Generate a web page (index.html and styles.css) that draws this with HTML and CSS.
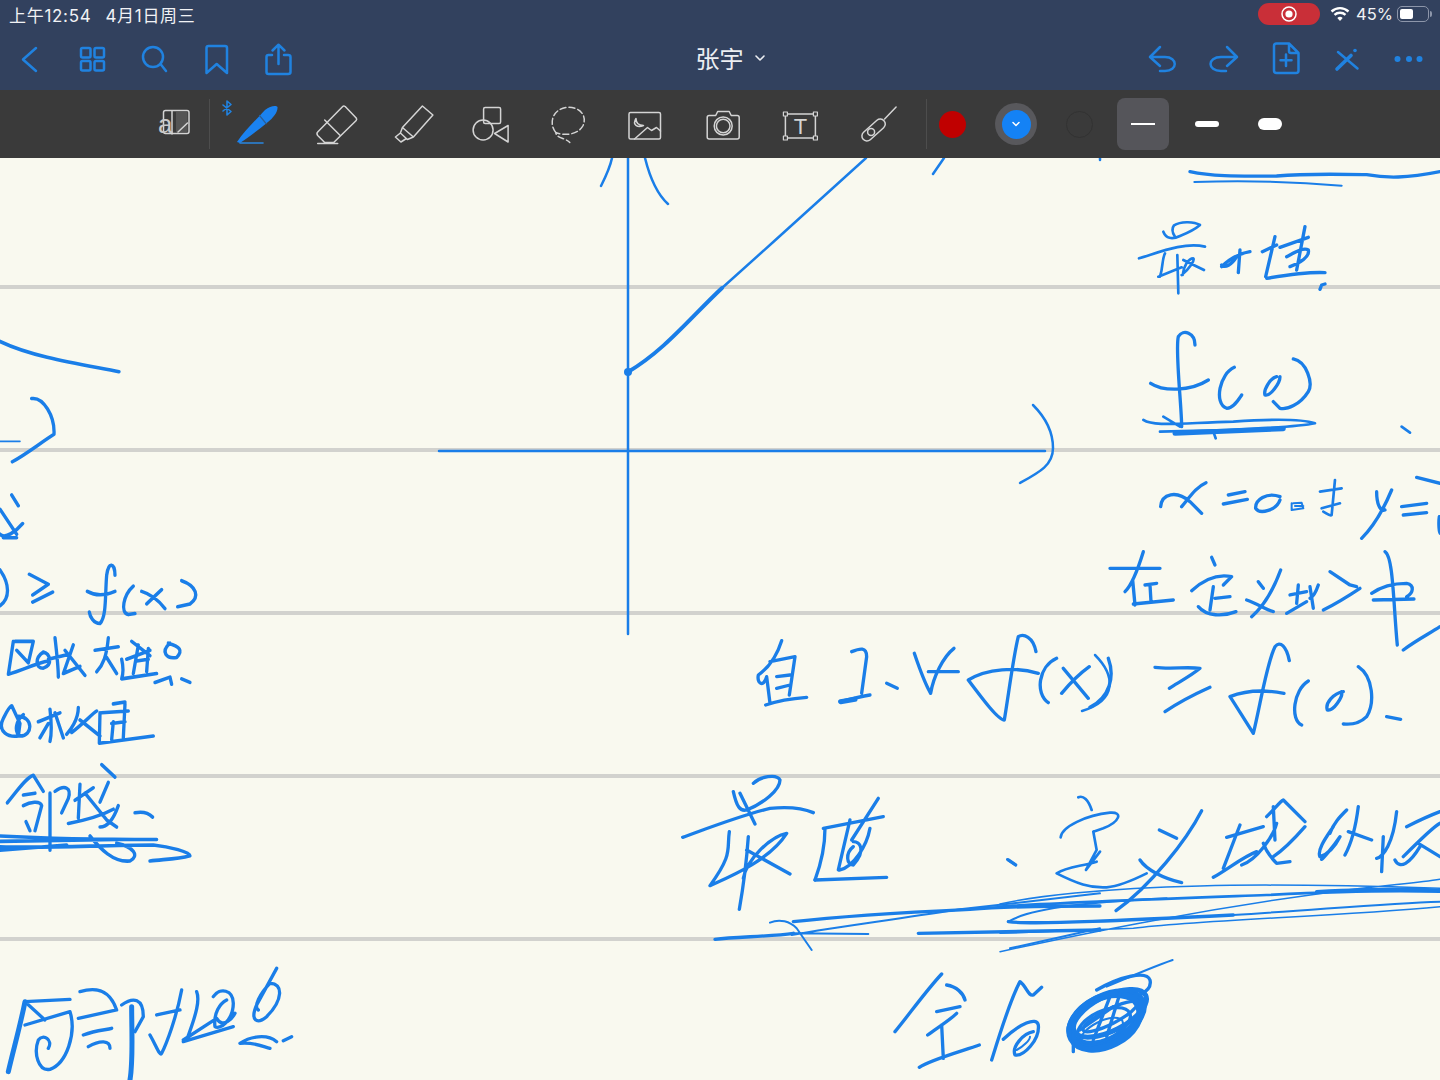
FILE: index.html
```html
<!DOCTYPE html>
<html lang="zh-CN">
<head>
<meta charset="utf-8">
<title>张宇</title>
<link rel="stylesheet" href="styles.css">
</head>
<body>
<div class="app">
  <header class="header">
    <div class="status">
      <div class="status-time"><span>上午12:54</span><span>4月1日周三</span></div>
      <div class="status-right">
        <div class="rec-pill"><svg class="rec-icon" viewBox="0 0 18 18"><circle class="rec-ring" cx="9" cy="9" r="7"/><circle class="rec-dot" cx="9" cy="9" r="3.6"/></svg></div>
        <svg class="wifi" viewBox="1331 5 20 17">
          <path class="wifi-arc" d="M1332.5 10.5C1337.5 6 1344.5 6 1349.5 10.5"/>
          <path class="wifi-arc" d="M1335.5 13.8C1338.5 11 1343.5 11 1346.5 13.8"/>
          <path class="wifi-fill" d="M1338.3 17C1340 15.3 1342 15.3 1343.7 17L1341 20Z"/>
        </svg>
        <span class="pct">45%</span>
        <div class="battery"><div class="battery-fill"></div></div>
        <div class="battery-tip"></div>
      </div>
    </div>
    <nav class="nav">
      <div class="nav-group">
        <button class="nav-btn"><svg class="nav-ic" viewBox="8 37 44 44"><path d="M36 48L23 59.5L36 71"/></svg></button>
        <button class="nav-btn"><svg class="nav-ic" viewBox="70 37 44 44"><rect x="81" y="48" width="9.5" height="9.5" rx="1.5"/><rect x="94.500" y="48" width="9.5" height="9.5" rx="1.5"/><rect x="81" y="61" width="9.5" height="9.5" rx="1.5"/><rect x="94.500" y="61" width="9.5" height="9.5" rx="1.5"/></svg></button>
        <button class="nav-btn"><svg class="nav-ic" viewBox="132 37 44 44"><circle cx="153" cy="57" r="10"/><path d="M160.500 64L166 71"/></svg></button>
        <button class="nav-btn"><svg class="nav-ic" viewBox="194 37 44 44"><path d="M206.500 73V48Q206.500 46 208.500 46H225Q227 46 227 48V73L216.700 64Z"/></svg></button>
        <button class="nav-btn"><svg class="nav-ic" viewBox="256 37 44 44"><path d="M272 55H268.500Q266.500 55 266.500 57V72Q266.500 74 268.500 74H288Q290.500 74 290.500 72V57Q290.500 55 288 55H284"/><path d="M278.500 64V45M272.500 50.500L278.500 44.700L284.500 50.500"/></svg></button>
      </div>
      <div class="title"><span>张宇</span><svg class="title-chev" viewBox="0 0 12 8"><path d="M2 2L6 6L10 2"/></svg></div>
      <div class="nav-group">
        <button class="nav-btn"><svg class="nav-ic" viewBox="1140 37 44 44"><path d="M1160 47L1150 57L1160 66M1150 57H1165C1178 57 1178 71 1165 71H1160"/></svg></button>
        <button class="nav-btn"><svg class="nav-ic" viewBox="1202 37 44 44"><path d="M1227 47L1237 57L1227 66M1237 57H1221C1207 57 1207 71 1221 71H1226"/></svg></button>
        <button class="nav-btn"><svg class="nav-ic" viewBox="1264 37 44 44"><path d="M1276.500 43.500H1289L1298.500 53V70.500Q1298.500 73 1296 73H1276.500Q1274 73 1274 70.500V46Q1274 43.500 1276.500 43.500ZM1289 43.500V51Q1289 53 1291 53H1298.500M1286 54.500V66M1280.500 60.200H1291.500"/></svg></button>
        <button class="nav-btn"><svg class="nav-ic" viewBox="1326 37 44 44"><path d="M1338 52L1357.500 68.500"/><path class="pencil-line" d="M1337 69L1351 55.500"/><circle class="ic-dot" cx="1355" cy="50.500" r="1.800"/></svg></button>
        <button class="nav-btn"><svg class="nav-ic" viewBox="1388 37 44 44"><circle class="ic-dot" cx="1397.500" cy="59" r="3"/><circle class="ic-dot" cx="1409" cy="59" r="3"/><circle class="ic-dot" cx="1419.500" cy="59" r="3"/></svg></button>
      </div>
    </nav>
  </header>

  <div class="toolbar">
    <button class="tool tool-page"><svg class="tool-ic" viewBox="150 100 48 48"><rect x="163.500" y="110.500" width="25.500" height="23" rx="2"/><path class="page-shade" d="M176 112H187.500V132H176Z"/><path d="M178 132L187.500 123M172 111V134"/><text class="page-a" x="158" y="133">a</text></svg></button>
    <div class="sep"></div>
    <div class="tools">
      <button class="tool"><svg class="tool-ic" viewBox="221 90 77.300 68">
        <path class="pen-blue" d="M237 142C245 130 258 118 265 110C270 106 276 105 277.500 107C278 112 273 118 268 122C258 130 248 138 240 143Z"/>
        <path class="pen-band" d="M259.500 115.500L266 123.500"/>
        <path class="pen-under" d="M240 143H263"/>
        <path class="pen-bt" d="M223 105L231 111.500L227 115V101L231 104.500L223 111"/>
      </svg></button>
      <button class="tool"><svg class="tool-ic" viewBox="298.300 90 77.300 68"><path d="M343 106.500Q344 105.500 345.500 106.500L356.500 118Q357.500 119.500 356.500 120.500L334 142.500L325 142.500L318 135.500Q316.500 133.500 318 132ZM325 120L340 135M318 143.500H338"/></svg></button>
      <button class="tool"><svg class="tool-ic" viewBox="375.600 90 77.300 68"><path d="M422 106L432.500 115L413 137L402 127.500ZM402 127.500L400 133L407 139.500L413 137M400 133L395 137L400.500 142L406 138.500"/></svg></button>
      <button class="tool"><svg class="tool-ic" viewBox="452.900 90 77.300 68"><rect x="483.500" y="107.500" width="17" height="16" rx="1.500"/><circle cx="483" cy="130" r="10"/><path d="M508 125.500V142L494.500 133.500Z"/></svg></button>
      <button class="tool"><svg class="tool-ic" viewBox="530.200 90 77.300 68"><path class="lasso" d="M556 132.500C549 124 552 110 566 107.500C580 106 588 116 583 126C578 135 564 136 556 132.500C556 138 566 138 570 142.500"/></svg></button>
      <button class="tool"><svg class="tool-ic" viewBox="607.500 90 77.300 68"><rect x="629.500" y="112.500" width="31.500" height="26.500" rx="1.500"/><path d="M636.500 118.500C632.500 125 638 128 644 125.500C639.500 125.500 636.500 123 636.500 118.500ZM635 139L648 127.500L652 130.500L657 127.500L661 131"/></svg></button>
      <button class="tool"><svg class="tool-ic" viewBox="684.800 90 77.300 68"><path d="M709 115.500H715.500L717.500 111.500H729L731 115.500H737Q739 115.500 739 117.500V137Q739 139 737 139H709Q707 139 707 137V117.500Q707 115.500 709 115.500Z"/><circle cx="723" cy="126" r="9"/><circle cx="723" cy="126" r="6.800"/></svg></button>
      <button class="tool"><svg class="tool-ic" viewBox="762.100 90 77.300 68"><rect x="785.500" y="114" width="30" height="24"/><rect class="handle" x="783.500" y="112" width="4" height="4"/><rect class="handle" x="813.500" y="112" width="4" height="4"/><rect class="handle" x="783.500" y="136" width="4" height="4"/><rect class="handle" x="813.500" y="136" width="4" height="4"/><text class="text-t" x="800.500" y="134">T</text></svg></button>
      <button class="tool"><svg class="tool-ic" viewBox="839.400 90 77.300 68"><rect x="-14" y="-5" width="28" height="10" rx="5" transform="translate(874 130) rotate(-42)"/><circle cx="871.500" cy="132" r="3.500"/><path d="M885 119L896.500 107"/></svg></button>
    </div>
    <div class="sep sep-2"></div>
    <div class="swatches">
      <button class="swatch"><span class="dot dot-red"></span></button>
      <button class="swatch"><span class="dot-ring"><span class="dot dot-blue"><svg class="dot-chev" viewBox="0 0 10 6"><path d="M2 1.500L5 4.500L8 1.500"/></svg></span></span></button>
      <button class="swatch"><span class="dot dot-black"></span></button>
      <button class="swatch swatch-on"><span class="stroke stroke-1"></span></button>
      <button class="swatch"><span class="stroke stroke-2"></span></button>
      <button class="swatch"><span class="stroke stroke-3"></span></button>
    </div>
  </div>

  <main class="canvas">
    <svg class="ink" viewBox="0 158 1440 922" role="img" aria-label="手写笔记">
      <!-- graph -->
      <path class="w2" d="M628 158V634M439 451H1045"/>
      <path class="w2" d="M601 186C606 176 610 168 612 158M645 158C650 178 658 195 668 204"/>
      <path class="w2" d="M866 158C820 200 770 245 722 288"/>
      <path class="w3" d="M722 288C690 318 665 350 628 372"/>
      <circle class="blob" cx="628" cy="372" r="4"/>
      <path class="w2" d="M1033 405C1043 415 1053 430 1053 448C1053 465 1040 472 1020 483"/>
      <path class="w2" d="M933 174L944 158M1100 158V160"/>

      <!-- top right, max and f(0) -->
      <g class="z" transform="translate(1100 160) scale(.3333)">
        <path class="zw9" d="M270 35C330 48 400 50 530 48C620 40 700 42 800 44C860 55 920 55 1020 35"/>
        <path class="zw5" d="M283 66C400 62 550 62 725 77"/>
        <path d="M190 215C198 235 215 240 240 228C265 218 285 208 300 195C280 183 240 185 222 196C215 205 215 215 225 230"/>
        <path d="M117 295C170 280 250 245 315 260M180 350C190 320 185 300 195 280M175 350L245 322M235 400L232 285M245 345C270 325 285 300 280 295C265 295 250 320 248 345M250 300L312 330"/>
        <path class="zw9" d="M365 320C390 295 420 280 450 275M415 338L420 270M365 315C375 325 395 315 410 290"/>
        <path class="zw9" d="M487 275L530 255M525 230L497 350M500 355C560 345 620 335 675 338M615 200L590 330M540 262L625 232M560 290C580 280 610 260 625 270C630 290 600 310 570 320M660 388L665 375L675 372"/>
        <path class="zw9" d="M285 555C285 520 250 505 235 530C225 570 245 740 245 800M152 670C190 695 270 695 325 660M403 622C360 640 340 730 380 745C400 745 415 720 425 705M530 650C510 655 490 690 495 705C510 710 540 670 540 650M580 597C620 605 640 670 625 695C600 735 560 750 540 745L520 725"/>
        <path d="M130 780C160 800 230 790 400 785C500 778 600 775 645 790C600 800 500 805 380 810L180 815M190 770L240 800M340 815L347 835M905 800L930 818"/>
        <path class="zw14" d="M225 820L550 806"/>
      </g>

      <!-- x=0 right -->
      <g class="z" transform="translate(1090 470) scale(.3333)">
        <path class="zw9" d="M212 110C215 70 260 60 300 95L335 130M275 110C300 80 320 50 348 38M400 102L472 88M415 75L465 65M570 80C530 65 495 90 497 115C510 135 560 120 570 90"/>
        <path class="zw5" d="M605 100V120M610 100L635 98L640 115L605 120M615 108L640 108"/>
        <path d="M695 115L750 100M690 65L755 55M735 30L725 135C720 140 710 130 700 125"/>
        <path class="zw9" d="M860 65C860 100 870 125 885 120M905 60C880 120 850 170 815 205M935 110L1010 100M940 135L1010 128M980 22L1050 40M1048 140C1045 160 1048 190 1050 190"/>
        <path class="zw9" d="M60 295L210 295M160 245C140 310 120 350 105 365M128 330L135 405M165 345L200 340M180 345L183 395M130 402L250 390"/>
        <path class="zw9" d="M365 262L375 285M305 362C340 330 380 310 425 320L400 345M370 350L360 420M325 410C350 440 400 440 438 425M375 385L420 380"/>
        <path class="zw9" d="M505 335L520 355M572 300C550 360 520 410 485 440M470 390C500 400 530 420 550 425"/>
        <path class="zw9" d="M600 375L650 365M625 345L620 400M590 430L650 395M660 350L670 415M660 385C670 380 680 360 685 345M720 305L780 345L800 350M700 420C740 400 780 375 810 355"/>
        <path class="zw9" d="M845 370C880 345 920 340 950 340C975 345 970 370 950 380M850 390L972 387M885 245C910 260 910 400 922 525"/>
        <path class="zw9" d="M940 540C980 510 1020 490 1050 470"/>
        <path class="zw9" d="M195 592C240 598 290 590 330 595C300 620 260 640 238 655M225 725C270 695 320 670 360 652"/>
        <path class="zw9" d="M598 572C590 530 570 510 555 530C530 580 510 710 490 790C470 760 440 710 420 680C470 660 530 660 582 670M655 633C610 660 600 750 635 765M760 665C730 670 705 700 712 720C730 725 760 680 755 665M805 590C850 620 855 700 830 740C810 760 790 765 760 762M890 740L932 748M55 565C75 620 60 680 0 712"/>
      </g>

      <!-- middle line -->
      <g class="z" transform="translate(670 620) scale(.3333)">
        <path class="zw9" d="M335 62C320 110 300 140 265 165C260 190 280 205 290 170L300 250M300 125L375 110L358 225M320 170L360 165M320 205L360 195M287 255C330 240 370 235 410 232"/>
        <path class="zw9" d="M545 95C570 85 590 80 590 110L575 220M510 245C530 240 570 230 600 225M650 190L682 205"/>
        <path class="zw14" d="M512 245L555 238"/>
        <path class="zw9" d="M733 100C750 150 770 200 782 220C790 170 820 110 852 85M775 155L865 155"/>
        <path class="zw9" d="M1098 95C1090 50 1060 40 1045 50C1030 110 1015 230 1003 300C985 300 940 240 895 180C950 145 1040 140 1105 160M1160 115C1105 140 1095 220 1135 248M1180 145L1255 235M1175 220C1200 190 1230 160 1258 140"/>
        <path class="zw9" d="M190 515C200 560 210 575 230 570C280 550 330 510 330 480C320 460 270 470 250 490M210 520L255 612"/>
        <path class="zw9" d="M38 652C100 630 200 590 300 565C350 560 400 565 430 578M178 635C170 690 190 700 120 797C180 770 300 720 350 640C300 650 230 720 220 775M230 690L360 762M235 650C230 720 220 800 208 868"/>
        <path class="zw9" d="M625 535L545 660M460 625L640 590M465 625C465 680 450 740 435 780M540 600L505 750M550 665C570 665 590 690 550 735C530 735 525 700 550 680M600 625C590 680 550 740 510 750M1015 720L1037 735"/>
        <path class="zw9" d="M435 780L650 772"/>
        <path class="zw9" d="M135 958C200 950 300 950 370 940"/>
        <path class="zw5" d="M370 940L595 942M300 908C330 895 360 905 380 925L425 990M365 945C500 920 700 895 870 868L1290 820M1020 985L1290 925"/>
        <path class="zw9" d="M370 905C500 890 750 875 900 868C1000 860 1200 858 1290 858"/>
        <path class="zw9" d="M745 940L1290 930"/>
      </g>
      <path class="w2" d="M1095 655C1115 675 1118 700 1082 711"/>

      <!-- definition, strikes, scribble -->
      <g class="z" transform="translate(1000 760) scale(.3333)">
        <path d="M22 298L47 315M235 112C250 105 265 120 275 150M182 232C185 200 260 165 330 158C370 155 360 185 310 205L280 215M280 215L290 270L258 330L300 275M170 340C200 320 240 320 290 305M170 340C230 370 270 385 320 382C360 378 400 360 440 340"/>
        <path class="zw9" d="M478 210L530 235M605 152C560 240 450 380 348 452M420 300C440 330 490 355 545 368"/>
        <path class="zw9" d="M680 232L790 200M720 195L670 325M640 352C680 330 730 290 770 275M820 140L825 240M790 250C800 280 820 300 830 310L870 305M800 170C830 140 840 125 850 120L915 185M915 200C880 240 850 270 820 290M725 315C770 300 820 230 830 190"/>
        <path class="zw9" d="M1000 200C980 230 950 270 960 290C990 280 1010 250 1020 230C1000 260 970 295 965 298M1040 150C1020 170 1000 190 990 220M1075 140C1070 180 1060 240 1035 285M1045 215L1115 240M1130 295C1150 290 1180 250 1190 155M1150 230L1145 335M1185 300C1200 330 1230 310 1260 260M1220 200C1240 190 1280 170 1320 155M1210 290C1240 260 1300 200 1320 190M1255 250L1320 290"/>
        <path class="zw4" d="M0 432C100 410 300 385 600 378C800 372 1000 375 1320 385M0 520L400 505C600 480 1000 470 1320 440M0 575C300 510 600 450 1000 395C1150 375 1250 370 1320 358"/>
        <path class="zw7" d="M0 440C120 430 400 420 800 405C1000 395 1150 390 1320 395"/>
        <path class="zw5" d="M25 485C100 440 300 425 500 415M700 465C950 450 1150 430 1320 425"/>
        <path class="zw9" d="M25 485C100 495 400 480 700 465"/>
        <path class="zw9" d="M950 395C1100 388 1250 385 1320 392"/>
      </g>
      <g class="z" transform="translate(880 950) scale(.3333)">
        <path class="zw9" d="M45 245C90 190 140 120 185 72M200 105C230 110 250 130 255 150M170 185L240 170M143 255C170 235 210 210 230 190M185 225L190 325M118 352C150 330 240 305 298 285"/>
        <path class="zw9" d="M335 330C360 250 390 150 420 95C440 110 445 140 460 135L485 112M370 268C420 220 470 200 475 225C480 270 430 320 405 315C395 290 430 250 460 245"/>
        <path class="zw5" d="M410 300C430 290 450 270 450 260"/>
        <ellipse class="zw18" cx="680" cy="205" rx="118" ry="66" transform="rotate(-27 680 205)"/>
        <ellipse class="zw18" cx="675" cy="215" rx="112" ry="72" transform="rotate(-27 675 215)"/>
        <ellipse class="zw14" cx="690" cy="190" rx="120" ry="52" transform="rotate(-27 690 190)"/>
        <ellipse class="zw9" cx="672" cy="225" rx="85" ry="42" transform="rotate(-25 672 225)"/>
        <ellipse class="zw9" cx="690" cy="200" rx="90" ry="22" transform="rotate(-27 690 200)"/>
        <ellipse class="zw5" cx="665" cy="245" rx="70" ry="30" transform="rotate(-27 665 245)"/>
        <path class="zw9" d="M650 120C720 80 800 60 810 90C815 110 800 125 780 135M580 250L580 305M600 240L700 170M690 140L640 270M720 130L680 260"/>
        <path class="zw5" d="M680 110C750 80 820 50 878 30"/>
      </g>

      <!-- left column -->
      <g class="z" transform="translate(0 320) scale(.3333 .3571)">
        <path class="zw9" d="M0 60C100 105 250 125 357 145M95 220C130 215 165 270 162 320C120 345 80 375 37 397"/>
        <path class="zw4" d="M0 340L60 340"/>
        <path class="zw9" d="M35 490L55 520M0 600C15 615 50 590 68 570M0 530L50 600M10 610L50 610"/>
        <path class="zw9" d="M0 700C30 740 30 780 0 800M88 712L145 740L98 770M98 790L158 762"/>
        <path class="zw9" d="M345 715C345 680 325 675 320 715C315 770 320 830 300 850C280 850 270 830 268 818M262 760C290 775 320 770 345 760M400 745C370 770 360 820 385 825L405 822M425 760C460 770 480 790 495 808M440 795L485 755M545 730C590 745 600 775 570 795L533 803"/>
        <path class="zw9" d="M40 900L25 992C70 980 110 960 145 955M45 900H100L85 960M50 925L85 960M130 930C105 945 105 975 130 975C160 965 150 935 130 930M165 890C170 930 175 980 175 1000M145 950L210 935M195 925L255 995M220 910L190 990L240 970"/>
        <path class="zw9" d="M285 925L355 915M325 890C320 940 310 965 290 985M320 945L350 990M365 950C370 970 370 990 365 1005L470 990M395 900L450 940M380 950L450 925M415 910L400 990M445 920L440 985M410 955L445 950M510 905C480 930 500 950 530 945C550 925 540 915 505 905M465 1015L510 1000L515 1020M545 1005L570 1015"/>
        <path class="zw9" d="M0 1140C10 1110 30 1080 35 1080L60 1130L55 1165C20 1170 0 1150 5 1130M55 1110C100 1110 100 1165 60 1165C40 1150 50 1120 70 1105M115 1125L180 1100M150 1090C155 1130 155 1160 150 1180M120 1170L145 1130M165 1100L190 1170M215 1155C250 1130 280 1100 290 1095M235 1085C235 1120 210 1150 200 1160M240 1120L300 1165M305 1100L385 1095M340 1075L375 1070M300 1100L298 1185L460 1165M375 1075L370 1170M340 1125L335 1175M335 1130L375 1125"/>
        <path class="zw9" d="M22 1352C50 1320 80 1280 100 1275L130 1320M70 1330L105 1325M70 1360C90 1350 120 1345 125 1360L105 1430M78 1405L90 1430M150 1325V1485M165 1320C195 1300 215 1310 205 1340L185 1380M205 1410C260 1400 300 1390 340 1370M225 1345L280 1310M240 1300L235 1395M255 1325L320 1400L350 1420M355 1360C340 1400 320 1420 300 1420M305 1245L345 1280M325 1295L300 1350M405 1380C430 1375 445 1380 458 1392"/>
        <path class="zw9" d="M0 1445C100 1450 300 1455 470 1455M0 1460L350 1455M0 1475C150 1480 300 1470 460 1470C510 1475 570 1490 570 1500C530 1510 490 1510 450 1515M0 1485L200 1470M270 1445C300 1480 340 1520 390 1515C420 1500 400 1475 350 1465"/>
      </g>

      <!-- bottom left -->
      <g class="z" transform="translate(0 950) scale(.3333)">
        <path class="zw9" d="M75 225L210 185C230 250 200 340 150 358C115 365 100 310 115 270C130 250 160 270 145 295M75 155L210 148M75 155L135 210"/>
        <path class="zw14" d="M25 365C40 300 60 230 75 155"/>
        <path class="zw9" d="M235 205L350 180C330 120 290 110 240 125M250 255C290 240 320 240 335 235M265 290C300 270 330 270 330 295M365 165C400 140 430 145 430 200L405 245"/>
        <path class="zw14" d="M395 170C395 250 400 330 390 390"/>
        <path class="zw9" d="M450 255C470 290 480 320 485 310C500 280 530 200 545 120M470 195L540 180M590 125C600 150 590 190 560 270M550 270L650 205C670 240 700 200 705 190M640 140C660 110 700 120 700 160C700 210 660 240 645 230C640 190 660 160 680 150M550 275L700 230"/>
        <path class="zw9" d="M830 55L770 165C750 210 770 225 800 200C850 150 850 100 810 100C780 130 760 170 775 180M720 280C750 260 800 250 830 275M720 280C760 275 790 290 810 295M850 272L875 260"/>
      </g>
    </svg>
  </main>
</div>
</body>
</html>
```

FILE: styles.css
```css
* { box-sizing: border-box; }
html, body { margin: 0; padding: 0; }
body {
  width: 1440px;
  height: 1080px;
  overflow: hidden;
  font-family: Inter, "Noto Sans CJK SC", "Noto Sans", sans-serif;
  background: #f9f9ef;
}
button { border: 0; padding: 0; margin: 0; background: none; display: flex; align-items: center; justify-content: center; }
.app { display: flex; flex-direction: column; height: 1080px; }

.header { height: 90px; background: #32415e; display: flex; flex-direction: column; flex: none; }
.status { height: 28px; display: flex; justify-content: space-between; align-items: center; padding: 0 9px; color: #f1f2f5; font-size: 17px; }
.status-time { display: flex; gap: 14px; letter-spacing: .7px; }
.status-right { display: flex; align-items: center; }
.rec-pill { width: 62px; height: 22px; border-radius: 11px; background: #c92f38; display: flex; align-items: center; justify-content: center; margin-right: 10px; }
.rec-icon { width: 18px; height: 18px; }
.rec-ring { fill: none; stroke: #fff; stroke-width: 1.500; }
.rec-dot { fill: #fff; }
.wifi { width: 20px; height: 17px; margin-right: 6px; margin-top: 1px; }
.wifi-arc { fill: none; stroke: #fff; stroke-width: 2.400; }
.wifi-fill { fill: #fff; }
.pct { font-size: 16.500px; margin-right: 4px; }
.battery { width: 32px; height: 16px; border: 1px solid #8d96aa; border-radius: 5px; padding: 2px; }
.battery-fill { width: 13px; height: 100%; background: #fff; border-radius: 2px; }
.battery-tip { width: 2px; height: 6px; background: #8d96aa; border-radius: 0 2px 2px 0; margin-left: 1px; margin-right: -1px; }

.nav { flex: 1; display: flex; justify-content: space-between; align-items: center; padding: 0 8px; position: relative; }
.nav-group { display: flex; gap: 18px; }
.nav-btn { width: 44px; height: 44px; }
.nav-ic { width: 44px; height: 44px; fill: none; stroke: #2082e0; stroke-width: 2.500; stroke-linecap: round; stroke-linejoin: round; }
.pencil-line { stroke-width: 3.600; }
.ic-dot { fill: #2082e0; stroke: none; }
.title { display: flex; align-items: center; gap: 10px; color: #eceef2; font-size: 24px; font-family: "Noto Sans CJK SC", sans-serif; position: absolute; left: 695.500px; top: 12px; line-height: 36px; }
.title-chev { width: 12px; height: 8px; fill: none; stroke: #eceef2; stroke-width: 1.600; stroke-linecap: round; stroke-linejoin: round; }

.toolbar { height: 68px; flex: none; background: #3a3a3a; display: flex; align-items: center; padding-left: 150px; }
.tool { width: 77.300px; height: 68px; flex: none; }
.tool-page { width: 48px; height: 48px; margin-right: 11px; }
.tools { display: flex; margin-left: 11px; }
.tool-ic { width: 100%; height: 100%; fill: none; stroke: #d4d4d4; stroke-width: 1.500; stroke-linecap: round; stroke-linejoin: round; }
.page-shade { fill: #555; stroke: none; }
.page-a { fill: #c8c8c8; stroke: none; font-size: 26px; font-family: "Liberation Sans", sans-serif; }
.pen-blue { fill: #1a82f0; stroke: none; }
.pen-band { stroke: #2b5e96; stroke-width: 1.200; }
.pen-under { stroke: #2a86e0; stroke-width: 1.600; }
.pen-bt { stroke: #2082e0; stroke-width: 1.600; }
.lasso { stroke-dasharray: 6 3; }
.handle { fill: #3a3a3a; stroke-width: 1.200; }
.text-t { fill: #d4d4d4; stroke: none; font-size: 22px; font-family: "Liberation Sans", sans-serif; text-anchor: middle; }

.sep { width: 1px; height: 50px; background: #4d4d4d; flex: none; }
.tools + .sep { margin-left: 9.300px; }
.swatches { display: flex; gap: 11.500px; }
.swatch { width: 52px; height: 52px; border-radius: 8px; flex: none; }
.swatch-on { background: #55555a; }
.dot { display: flex; align-items: center; justify-content: center; border-radius: 50%; }
.dot-red { width: 27px; height: 27px; background: #c00000; }
.dot-ring { width: 42px; height: 42px; border-radius: 50%; background: #58585c; display: flex; align-items: center; justify-content: center; }
.dot-blue { width: 29px; height: 29px; background: #1482f5; }
.dot-chev { width: 10px; height: 6px; fill: none; stroke: #fff; stroke-width: 1.500; stroke-linecap: round; stroke-linejoin: round; }
.dot-black { width: 27px; height: 27px; background: #3a3a3a; border: 1px solid #323232; }
.stroke { width: 24px; background: #fff; display: block; }
.stroke-1 { height: 2px; }
.stroke-2 { height: 6px; border-radius: 3px; }
.stroke-3 { height: 12px; border-radius: 6px; }

.canvas {
  flex: 1;
  background-color: #f9f9ef;
  background-image: repeating-linear-gradient(to bottom, transparent 0, transparent 127px, #d2d2ce 127px, #d2d2ce 131px, transparent 131px, transparent 163px);
  overflow: hidden;
}
.ink { display: block; width: 1440px; height: 922px; fill: none; stroke: #1a7ee8; stroke-linecap: round; stroke-linejoin: round; }
.w2 { stroke-width: 2.500; }
.w3 { stroke-width: 4; }
.blob { fill: #1a7ee8; stroke: none; }
.z { stroke-width: 8; }
.zw4 { stroke-width: 4.500; }
.zw5 { stroke-width: 6; }
.zw7 { stroke-width: 8; }
.zw9 { stroke-width: 10; }
.zw14 { stroke-width: 15; }
.zw18 { stroke-width: 22; }
```
